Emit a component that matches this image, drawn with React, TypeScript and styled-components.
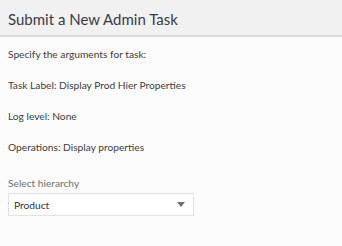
import React from 'react';
import styled, { createGlobalStyle } from 'styled-components';

const GlobalStyle = createGlobalStyle`
  html, body {
    margin: 0;
    padding: 0;
    background: #fcfcfc;
  }
  body {
    font-family: Lato, "Noto Sans", sans-serif;
    color: #3c3c3c;
  }
`;

const Page = styled.div`
  width: 342px;
  height: 246px;
  display: flex;
  flex-direction: column;
  background: #fcfcfc;
`;

const Header = styled.header`
  height: 35px;
  display: flex;
  align-items: center;
  padding: 0 8px;
  background: #f1f1f1;
  border-bottom: 2px solid #dcdcdc;
`;

const Title = styled.h1`
  margin: 0;
  padding-top: 2px;
  font-size: 15px;
  font-weight: 400;
  color: #3a3a4a;
`;

const Body = styled.div`
  display: flex;
  flex-direction: column;
  padding: 10px 8px 0;
`;

const Line = styled.p`
  margin: 0;
  height: 31px;
  line-height: 14px;
  font-size: 10.2px;
  color: #3c3c3c;
`;

const Field = styled.div`
  display: flex;
  flex-direction: column;
  gap: 4px;
  margin-top: 6px;
`;

const FieldLabel = styled.label`
  font-size: 10.2px;
  color: #6e6e6e;
`;

const SelectBox = styled.div`
  width: 171px;
  height: 21px;
  display: flex;
  align-items: center;
  justify-content: space-between;
  padding: 0 8px 0 5px;
  background: #ffffff;
  border: 1px solid #e2e2e2;
  font-size: 10.2px;
  color: #333333;
`;

const Caret = styled.span`
  width: 0;
  height: 0;
  border-left: 4.5px solid transparent;
  border-right: 4.5px solid transparent;
  border-top: 5px solid #707070;
`;

const App: React.FC = () => {
  return (
    <Page>
      <GlobalStyle />
      <Header>
        <Title>Submit a New Admin Task</Title>
      </Header>
      <Body>
        <Line>Specify the arguments for task:</Line>
        <Line>Task Label: Display Prod Hier Properties</Line>
        <Line>Log level: None</Line>
        <Line>Operations: Display properties</Line>
        <Field>
          <FieldLabel>Select hierarchy</FieldLabel>
          <SelectBox>
            Product
            <Caret />
          </SelectBox>
        </Field>
      </Body>
    </Page>
  );
};

export default App;
